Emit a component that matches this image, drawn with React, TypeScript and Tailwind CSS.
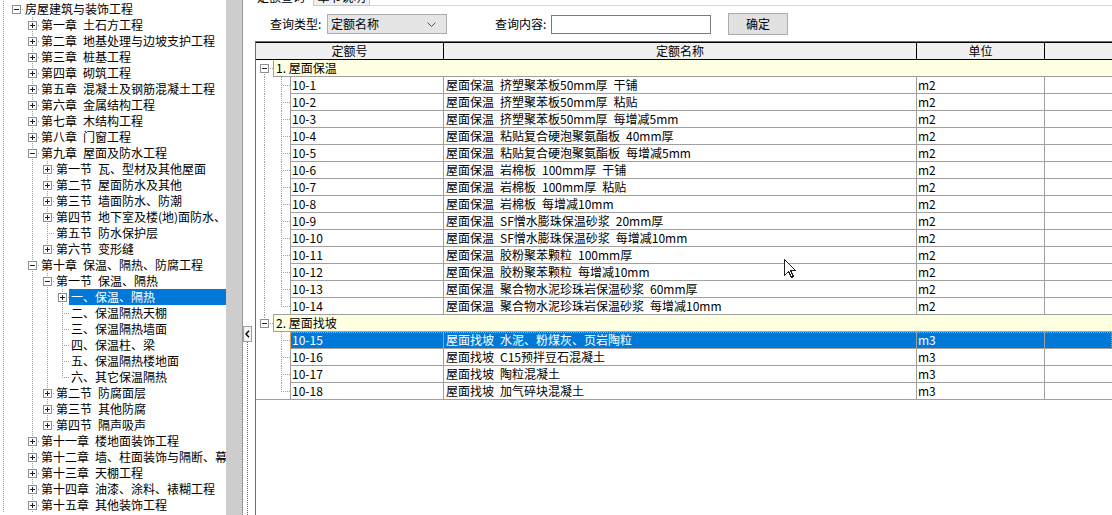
import React from 'react';

type TreeNode = { label: string; level: number; exp?: '+' | '-'; sel?: boolean; more?: boolean };

const S = '\u2002';

const treeNodes: TreeNode[] = [
  { label: '房屋建筑与装饰工程', level: 0, exp: '-' },
  { label: `第一章${S}土石方工程`, level: 1, exp: '+' },
  { label: `第二章${S}地基处理与边坡支护工程`, level: 1, exp: '+' },
  { label: `第三章${S}桩基工程`, level: 1, exp: '+' },
  { label: `第四章${S}砌筑工程`, level: 1, exp: '+' },
  { label: `第五章${S}混凝土及钢筋混凝土工程`, level: 1, exp: '+' },
  { label: `第六章${S}金属结构工程`, level: 1, exp: '+' },
  { label: `第七章${S}木结构工程`, level: 1, exp: '+' },
  { label: `第八章${S}门窗工程`, level: 1, exp: '+' },
  { label: `第九章${S}屋面及防水工程`, level: 1, exp: '-' },
  { label: `第一节${S}瓦、型材及其他屋面`, level: 2, exp: '+' },
  { label: `第二节${S}屋面防水及其他`, level: 2, exp: '+' },
  { label: `第三节${S}墙面防水、防潮`, level: 2, exp: '+' },
  { label: `第四节${S}地下室及楼(地)面防水、防潮`, level: 2, exp: '+' },
  { label: `第五节${S}防水保护层`, level: 2 },
  { label: `第六节${S}变形缝`, level: 2, exp: '+' },
  { label: `第十章${S}保温、隔热、防腐工程`, level: 1, exp: '-' },
  { label: `第一节${S}保温、隔热`, level: 2, exp: '-' },
  { label: '一、保温、隔热', level: 3, exp: '+', sel: true },
  { label: '二、保温隔热天棚', level: 3 },
  { label: '三、保温隔热墙面', level: 3 },
  { label: '四、保温柱、梁', level: 3 },
  { label: '五、保温隔热楼地面', level: 3 },
  { label: '六、其它保温隔热', level: 3 },
  { label: `第二节${S}防腐面层`, level: 2, exp: '+' },
  { label: `第三节${S}其他防腐`, level: 2, exp: '+' },
  { label: `第四节${S}隔声吸声`, level: 2, exp: '+' },
  { label: `第十一章${S}楼地面装饰工程`, level: 1, exp: '+' },
  { label: `第十二章${S}墙、柱面装饰与隔断、幕墙工程`, level: 1, exp: '+' },
  { label: `第十三章${S}天棚工程`, level: 1, exp: '+' },
  { label: `第十四章${S}油漆、涂料、裱糊工程`, level: 1, exp: '+' },
  { label: `第十五章${S}其他装饰工程`, level: 1, exp: '+', more: true },
];

const centers = [16, 32, 47, 62];
const textX = [25, 41, 56, 71];
const DOT = '#a0a0a0';

function hasNext(i: number) {
  const L = treeNodes[i].level;
  if (treeNodes[i].more) return true;
  for (let j = i + 1; j < treeNodes.length; j++) {
    if (treeNodes[j].level < L) return false;
    if (treeNodes[j].level === L) return true;
  }
  return false;
}

function ancestor(i: number, level: number) {
  for (let j = i - 1; j >= 0; j--) {
    if (treeNodes[j].level === level) return j;
  }
  return -1;
}

function Box({ c, kind }: { c: number; kind: '+' | '-' }) {
  return (
    <g>
      <rect x={c - 3.5} y={4.5} width={8} height={8} fill="#fff" stroke="#8e8f8f" />
      <line x1={c - 2} x2={c + 3} y1={8.5} y2={8.5} stroke="#1c1c3a" />
      {kind === '+' && <line x1={c + 0.5} x2={c + 0.5} y1={6} y2={11} stroke="#1c1c3a" />}
    </g>
  );
}

function TreeRow({ node, idx }: { node: TreeNode; idx: number }) {
  const L = node.level;
  const w = textX[L] - 2;
  const c = centers[L];
  const next = hasNext(idx);
  const anc: number[] = [];
  for (let k = 1; k < L; k++) {
    const a = ancestor(idx, k);
    if (a >= 0 && hasNext(a)) anc.push(centers[k]);
  }

  return (
    <div className="flex h-[16px]">
      <svg width={w} height={16} className="shrink-0" shapeRendering="crispEdges">
        <line x1={3.5} x2={3.5} y1={0} y2={16} stroke={DOT} strokeDasharray="1 1" />
        {anc.map((x) => (
          <line key={x} x1={x + 0.5} x2={x + 0.5} y1={0} y2={16} stroke={DOT} strokeDasharray="1 1" />
        ))}
        {L > 0 && (
          <line x1={c + 0.5} x2={c + 0.5} y1={0} y2={node.exp ? 4 : 9} stroke={DOT} strokeDasharray="1 1" />
        )}
        {L > 0 && next && (
          <line x1={c + 0.5} x2={c + 0.5} y1={node.exp ? 14 : 10} y2={16} stroke={DOT} strokeDasharray="1 1" />
        )}
        <line x1={c + (node.exp ? 6 : 2)} x2={w} y1={8.5} y2={8.5} stroke={DOT} strokeDasharray="1 1" />
        {node.exp && <Box c={c} kind={node.exp} />}
      </svg>
      <div
        className={`flex-1 whitespace-nowrap pl-[2px] leading-[16px] ${node.sel ? 'bg-[#0078d7] text-white' : ''}`}
      >
        {node.label}
      </div>
    </div>
  );
}

type Item = { code: string; name: string; unit: string };
type Group = { label: string; items: Item[] };

const groups: Group[] = [
  {
    label: '1. 屋面保温',
    items: [
      { code: '10-1', name: `屋面保温${S}挤塑聚苯板50mm厚${S}干铺`, unit: 'm2' },
      { code: '10-2', name: `屋面保温${S}挤塑聚苯板50mm厚${S}粘贴`, unit: 'm2' },
      { code: '10-3', name: `屋面保温${S}挤塑聚苯板50mm厚${S}每增减5mm`, unit: 'm2' },
      { code: '10-4', name: `屋面保温${S}粘贴复合硬泡聚氨酯板${S}40mm厚`, unit: 'm2' },
      { code: '10-5', name: `屋面保温${S}粘贴复合硬泡聚氨酯板${S}每增减5mm`, unit: 'm2' },
      { code: '10-6', name: `屋面保温${S}岩棉板${S}100mm厚${S}干铺`, unit: 'm2' },
      { code: '10-7', name: `屋面保温${S}岩棉板${S}100mm厚${S}粘贴`, unit: 'm2' },
      { code: '10-8', name: `屋面保温${S}岩棉板${S}每增减10mm`, unit: 'm2' },
      { code: '10-9', name: `屋面保温${S}SF憎水膨珠保温砂浆${S}20mm厚`, unit: 'm2' },
      { code: '10-10', name: `屋面保温${S}SF憎水膨珠保温砂浆${S}每增减10mm`, unit: 'm2' },
      { code: '10-11', name: `屋面保温${S}胶粉聚苯颗粒${S}100mm厚`, unit: 'm2' },
      { code: '10-12', name: `屋面保温${S}胶粉聚苯颗粒${S}每增减10mm`, unit: 'm2' },
      { code: '10-13', name: `屋面保温${S}聚合物水泥珍珠岩保温砂浆${S}60mm厚`, unit: 'm2' },
      { code: '10-14', name: `屋面保温${S}聚合物水泥珍珠岩保温砂浆${S}每增减10mm`, unit: 'm2' },
    ],
  },
  {
    label: '2. 屋面找坡',
    items: [
      { code: '10-15', name: `屋面找坡${S}水泥、粉煤灰、页岩陶粒`, unit: 'm3' },
      { code: '10-16', name: `屋面找坡${S}C15预拌豆石混凝土`, unit: 'm3' },
      { code: '10-17', name: `屋面找坡${S}陶粒混凝土`, unit: 'm3' },
      { code: '10-18', name: `屋面找坡${S}加气碎块混凝土`, unit: 'm3' },
    ],
  },
];

const selectedCode = '10-15';

function GroupRow({ label, first, last }: { label: string; first: boolean; last: boolean }) {
  return (
    <div className="flex h-[17px]">
      <svg width={17} height={17} className="shrink-0" shapeRendering="crispEdges">
        {!first && <line x1={8.5} x2={8.5} y1={0} y2={4} stroke={DOT} strokeDasharray="1 1" />}
        {!last && <line x1={8.5} x2={8.5} y1={14} y2={17} stroke={DOT} strokeDasharray="1 1" />}
        <line x1={14} x2={17} y1={8.5} y2={8.5} stroke={DOT} strokeDasharray="1 1" />
        <Box c={8} kind="-" />
      </svg>
      <div
        className={`flex-1 border-b border-l border-[#a0a0a0] bg-[#ffffe1] pl-[2px] leading-[16px] ${
          first ? 'h-[17px]' : '-mt-[1px] h-[18px] border-t'
        }`}
      >
        {label}
      </div>
    </div>
  );
}

function ItemRow({
  item,
  groupLast,
  lastChild,
  bottom,
}: {
  item: Item;
  groupLast: boolean;
  lastChild: boolean;
  bottom: boolean;
}) {
  const sel = item.code === selectedCode;
  return (
    <div className="flex h-[17px]">
      <svg width={34} height={17} className="shrink-0" shapeRendering="crispEdges">
        {!groupLast && <line x1={8.5} x2={8.5} y1={0} y2={17} stroke={DOT} strokeDasharray="1 1" />}
        <line x1={25.5} x2={25.5} y1={0} y2={lastChild ? 9 : 17} stroke={DOT} strokeDasharray="1 1" />
        <line x1={27} x2={34} y1={8.5} y2={8.5} stroke={DOT} strokeDasharray="1 1" />
        {bottom && <line x1={0} x2={34} y1={16.5} y2={16.5} stroke="#a0a0a0" />}
      </svg>
      <div
        className={`flex flex-1 leading-[16px] ${
          sel ? 'bg-[#0078d7] text-white outline-1 outline-dotted outline-[#e39a4c] -outline-offset-1' : ''
        }`}
      >
        <div className="w-[153px] border-b border-l border-[#a0a0a0] pl-[1px]">{item.code}</div>
        <div className="w-[473px] whitespace-nowrap border-b border-l border-[#a0a0a0] pl-[2px]">{item.name}</div>
        <div className="w-[128px] border-b border-l border-[#a0a0a0] pl-[1px]">{item.unit}</div>
        <div className="flex-1 border-b border-l border-[#a0a0a0]" />
      </div>
    </div>
  );
}

export default function App() {
  return (
    <div className="relative flex h-[515px] w-[1112px] overflow-hidden bg-white font-['Noto_Sans_CJK_SC',sans-serif] text-[12px] text-black">
      {/* Left chapter tree */}
      <div className="flex w-[242px] shrink-0">
        <div className="w-[226px] overflow-hidden pt-[1px]">
          {treeNodes.map((node, i) => (
            <TreeRow key={i} node={node} idx={i} />
          ))}
        </div>
        <div className="w-[16px] bg-[#cdcdcd]" />
      </div>

      {/* Splitter */}
      <div className="flex w-[13px] shrink-0 flex-col items-start border-l border-[#9a9a9a] pt-[326px]">
        <div className="flex h-[16px] w-[9px] items-center justify-center border border-[#a0a0a0] bg-[#f4f4f4]">
          <svg width={5} height={8} viewBox="0 0 5 8">
            <polyline points="4,0.8 1,4 4,7.2" fill="none" stroke="#000" strokeWidth={1.4} />
          </svg>
        </div>
        <div className="ml-[4px] flex-1 border-l border-dotted border-[#1e78d2]" />
      </div>

      {/* Query panel */}
      <div className="flex min-w-0 flex-1 flex-col">
        <div className="flex h-[6px] overflow-hidden">
          <div className="-mt-[12px] flex h-[18px] shrink-0">
            <div className="w-[58px] pl-[2px] leading-[18px]">定额查询</div>
            <div className="w-[57px] border border-[#c8c8c8] bg-[#f0f0f0] text-center leading-[16px]">章节说明</div>
          </div>
          <div className="flex-1 border-b border-[#d9d9d9]" />
        </div>

        <div className="mt-[7px] flex h-[22px] items-center pl-[15px]">
          <span className="w-[56px] whitespace-nowrap">查询类型:</span>
          <div className="ml-[1px] flex h-[20px] w-[120px] items-center justify-between border border-[#adadad] bg-[#e5e5e5] pl-[3px] pr-[10px]">
            <span>定额名称</span>
            <svg width={9} height={5} viewBox="0 0 9 5">
              <polyline points="0.5,0.5 4.5,4.5 8.5,0.5" fill="none" stroke="#555" />
            </svg>
          </div>
          <span className="ml-[48px] w-[54px] whitespace-nowrap">查询内容:</span>
          <div className="ml-[2px] h-[19px] w-[160px] border border-[#7a7a7a] bg-white" />
          <button className="ml-[17px] h-[22px] w-[60px] border border-[#adadad] bg-[#e1e1e1]">确定</button>
        </div>

        {/* Quota grid */}
        <div className="mt-[6px] flex-1 border-l border-t border-[#6e6e6e]">
          <div className="flex h-[18px] border-y border-black bg-[#f0f0f0] leading-[16px]">
            <div className="w-[187px] text-center">定额号</div>
            <div className="w-[473px] border-l border-black text-center">定额名称</div>
            <div className="w-[128px] border-l border-black text-center">单位</div>
            <div className="flex-1 border-l border-black" />
          </div>
          {groups.map((g, gi) => (
            <div key={g.label}>
              <GroupRow label={g.label} first={gi === 0} last={gi === groups.length - 1} />
              {g.items.map((item, ii) => (
                <ItemRow
                  key={item.code}
                  item={item}
                  groupLast={gi === groups.length - 1}
                  lastChild={ii === g.items.length - 1}
                  bottom={gi === groups.length - 1 && ii === g.items.length - 1}
                />
              ))}
            </div>
          ))}
        </div>
      </div>

      {/* Mouse pointer */}
      <svg width={13} height={20} className="absolute left-[784px] top-[259px]" shapeRendering="crispEdges">
        <path d="M0.5 0.5 L0.5 16.5 L4.5 12.5 L7.5 18.5 L9.5 17.5 L6.5 11.5 L11.5 11.5 Z" fill="#fff" stroke="#222" />
      </svg>
    </div>
  );
}
